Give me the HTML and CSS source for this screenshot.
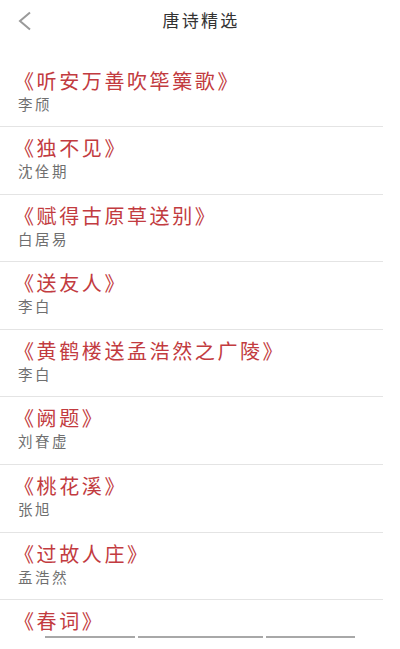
FILE: index.html
```html
<!DOCTYPE html>
<html lang="zh-CN">
	<head>
		<meta charset="UTF-8">
		<meta name="viewport" content="width=device-width, initial-scale=1.0">
		<title>唐诗精选</title>
		<link rel="stylesheet" href="styles.css">
	</head>
	<body>
		<div class="page">
			<div class="topbar">
				<span class="back">
					<svg width="16" height="20" viewBox="0 0 16 20">
						<polyline points="13,1.5 3,10 13,18.5" fill="none" stroke="#9a9a9a" stroke-width="2" stroke-linejoin="miter"/>
					</svg>
				</span>
				<h1 class="title">唐诗精选</h1>
			</div>

			<ul class="poems">
				<li class="poem">
					<p class="name">《听安万善吹筚篥歌》</p>
					<p class="author">李颀</p>
				</li>
				<li class="poem">
					<p class="name">《独不见》</p>
					<p class="author">沈佺期</p>
				</li>
				<li class="poem">
					<p class="name">《赋得古原草送别》</p>
					<p class="author">白居易</p>
				</li>
				<li class="poem">
					<p class="name">《送友人》</p>
					<p class="author">李白</p>
				</li>
				<li class="poem">
					<p class="name">《黄鹤楼送孟浩然之广陵》</p>
					<p class="author">李白</p>
				</li>
				<li class="poem">
					<p class="name">《阙题》</p>
					<p class="author">刘眘虚</p>
				</li>
				<li class="poem">
					<p class="name">《桃花溪》</p>
					<p class="author">张旭</p>
				</li>
				<li class="poem">
					<p class="name">《过故人庄》</p>
					<p class="author">孟浩然</p>
				</li>
				<li class="poem">
					<p class="name">《春词》</p>
					<div class="rule">
						<span class="seg s1"></span>
						<span class="seg s2"></span>
						<span class="seg s3"></span>
					</div>
				</li>
			</ul>
		</div>
	</body>
</html>
```

FILE: styles.css
```css
html, body {
	margin: 0;
	padding: 0;
	background: #fff;
}

body {
	font-family: "Noto Sans CJK SC", "Noto Sans", sans-serif;
	width: 400px;
	height: 649px;
	overflow: hidden;
}

.topbar {
	height: 59.5px;
	display: flex;
	align-items: flex-start;
	justify-content: center;
	position: relative;
}

.topbar .back {
	position: absolute;
	left: 17px;
	top: 11px;
	width: 16px;
	height: 20px;
}

.topbar .title {
	margin: 8px 0 0 2px;
	font-size: 17px;
	line-height: 24px;
	font-weight: normal;
	letter-spacing: 2.3px;
	color: #333;
}

.poems {
	list-style: none;
	margin: 0;
	padding: 0;
}

.poem {
	box-sizing: border-box;
	height: 67.6px;
	padding: 8px 0 0 14px;
	margin-right: 17px;
	border-bottom: 1.5px solid #e4e4e4;
}

.poem .name {
	margin: 0;
	font-size: 20px;
	line-height: 26px;
	letter-spacing: 2.6px;
	color: #c23b40;
}

.poem .author {
	margin: 0 0 0 4px;
	font-size: 14.5px;
	line-height: 20px;
	letter-spacing: 2.5px;
	color: #6f6f6f;
}

.rule {
	display: flex;
	gap: 3px;
	margin: 2px 0 0 31px;
}

.rule .seg {
	height: 1.5px;
	background: #a8a8a8;
}

.rule .s1 { width: 90px; }
.rule .s2 { width: 125px; }
.rule .s3 { width: 89px; }
```
